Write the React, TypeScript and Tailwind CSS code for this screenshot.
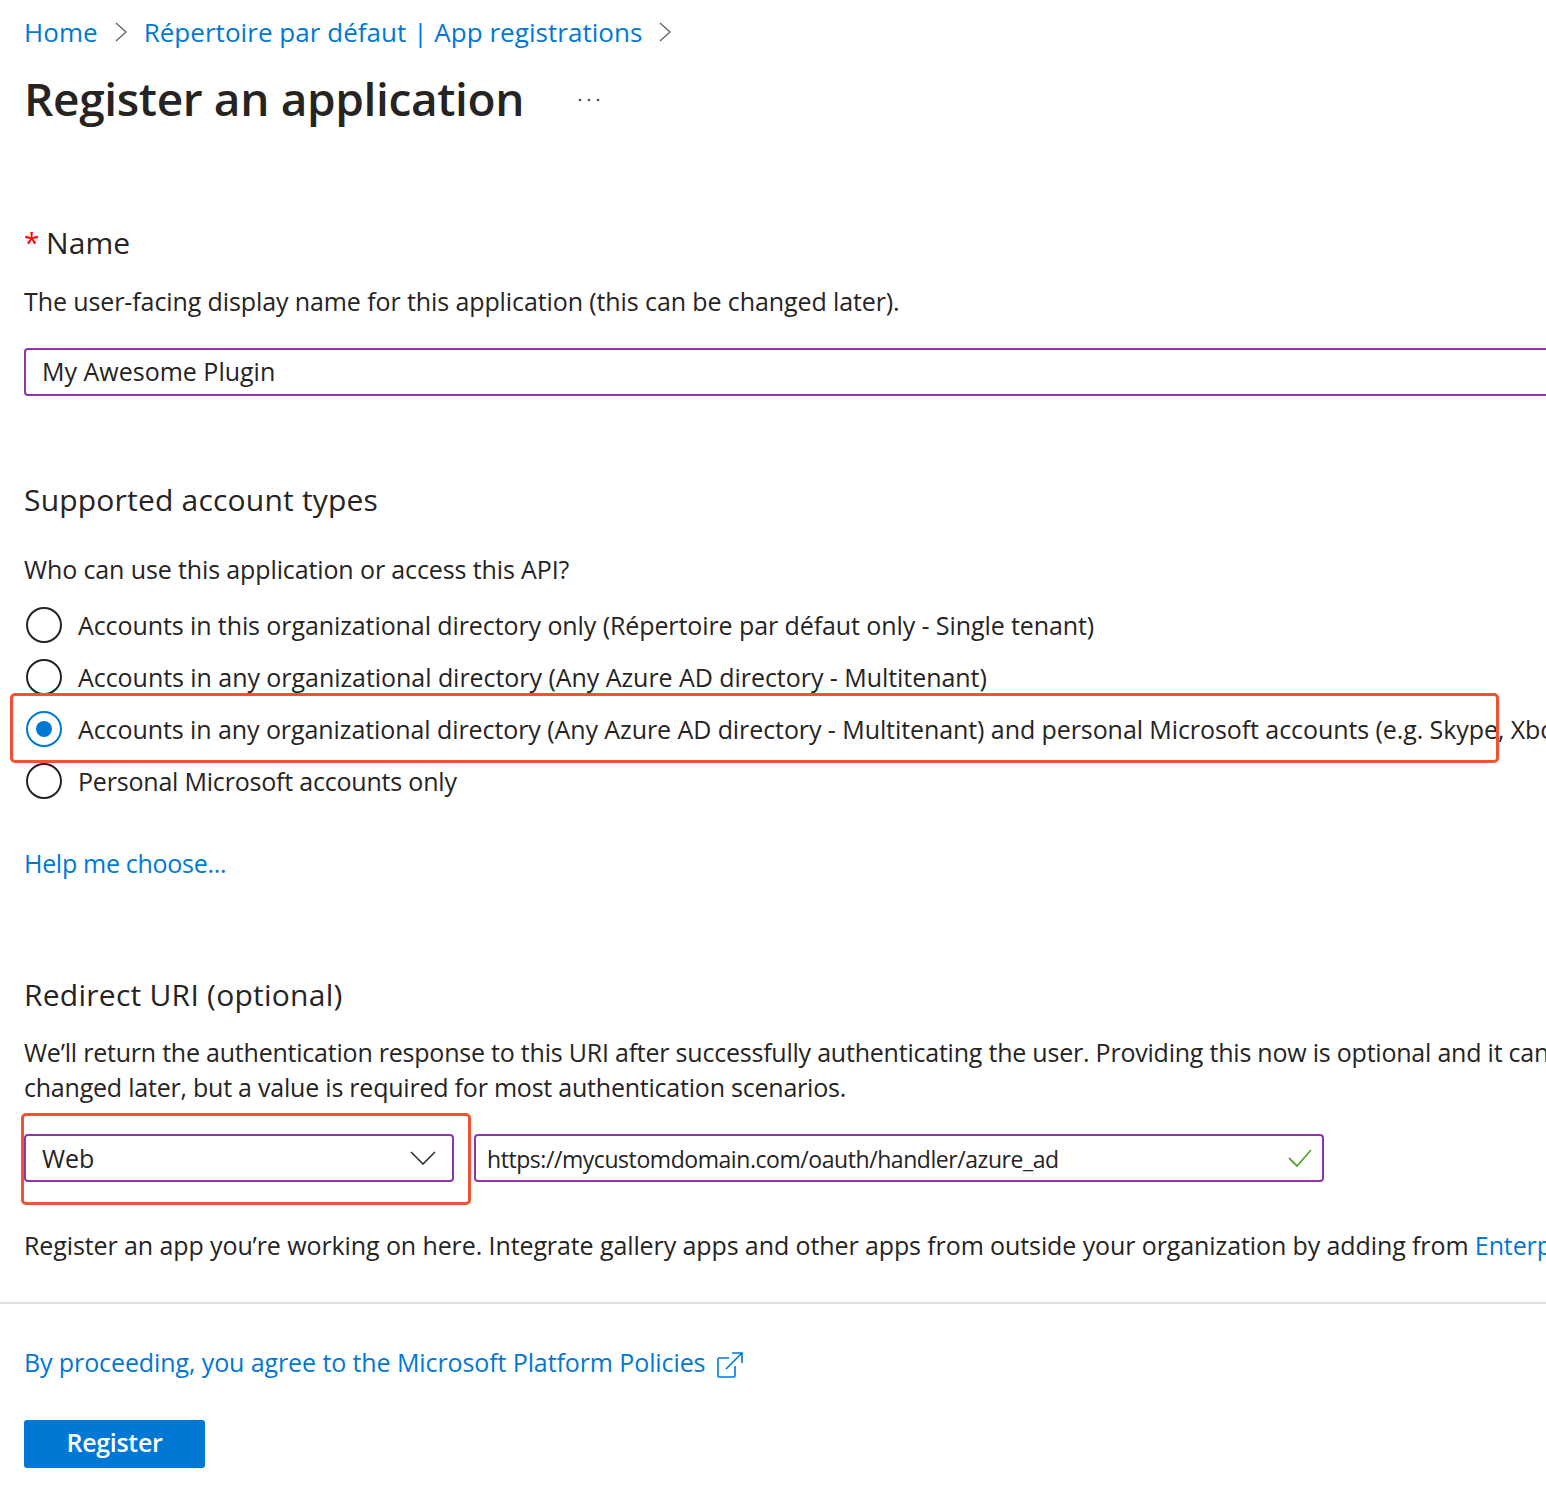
import React from "react";

const FONT = "font-['Open_Sans','Noto_Sans',sans-serif]";
const BODY = "text-[25px] tracking-[-0.1px] whitespace-nowrap";
const INK = "text-[#252423]";
const LINK = "text-[#0078d4]";

function Radio({ checked, label, spacing }: { checked?: boolean; label: string; spacing: string }) {
  return (
    <div className="flex h-[52px] items-center gap-[16px]">
      <span className={`flex h-[36px] w-[36px] shrink-0 items-center justify-center rounded-full border-2 ${checked ? "border-[#0078d4]" : "border-[#252423]"}`}>
        {checked && <span className="h-[16px] w-[16px] rounded-full bg-[#0078d4]" />}
      </span>
      <span className={`mt-[2px] whitespace-nowrap text-[25px] ${spacing} ${INK}`}>{label}</span>
    </div>
  );
}

function Chevron() {
  return (
    <svg className="mx-[17px] h-[20px] w-[12px] shrink-0" viewBox="0 0 12 20" fill="none" stroke="#6b6a69" strokeWidth="1.5">
      <path d="M1 1l10 9-10 9" />
    </svg>
  );
}

export default function App() {
  return (
    <div className={`relative h-[1488px] w-[1546px] overflow-hidden bg-white ${FONT}`}>
      <div className="pl-[24px]">
        <nav className={`mt-[16px] flex h-[32px] items-center whitespace-nowrap text-[26px] tracking-[0.04px] ${LINK}`}>
          <span>Home</span>
          <Chevron />
          <span>Répertoire par défaut | App registrations</span>
          <Chevron />
        </nav>
        <div className="mt-[18px] flex h-[64px] items-center">
          <h1 className={`whitespace-nowrap text-[46px] font-semibold tracking-[-0.36px] ${INK}`}>Register an application</h1>
          <svg className="ml-[54px] mt-[4px] h-[4px] w-[22px]" viewBox="0 0 22 4" fill="#55514e"><circle cx="2" cy="2" r="1.3" /><circle cx="11" cy="2" r="1.3" /><circle cx="20" cy="2" r="1.3" /></svg>
        </div>

        <div className={`mt-[92px] flex h-[40px] items-center ${INK}`}>
          <span className="w-[22px] text-[28px] leading-none text-[#ff0000]">*</span>
          <span className="whitespace-nowrap text-[30px] tracking-[0.1px]">Name</span>
        </div>
        <p className={`mt-[21px] h-[36px] leading-[36px] ${BODY} ${INK}`}>The user-facing display name for this application (this can be changed later).</p>
        <div className="mt-[29px] flex h-[48px] w-[1600px] items-center rounded-[4px] border-2 border-[#9132ad] pl-[16px]">
          <span className={`whitespace-nowrap text-[25px] ${INK}`}>My Awesome Plugin</span>
        </div>

        <h2 className={`mt-[84px] h-[40px] whitespace-nowrap text-[30px] font-normal leading-[40px] tracking-[0.2px] ${INK}`}>Supported account types</h2>
        <p className={`mt-[31px] h-[36px] leading-[36px] tracking-[-0.12px] whitespace-nowrap text-[25px] ${INK}`}>Who can use this application or access this API?</p>
        <div className="mt-[12px] flex flex-col pl-[2px]">
          <Radio spacing="tracking-[-0.09px]" label="Accounts in this organizational directory only (Répertoire par défaut only - Single tenant)" />
          <Radio spacing="tracking-[-0.05px]" label="Accounts in any organizational directory (Any Azure AD directory - Multitenant)" />
          <Radio checked spacing="tracking-[-0.08px]" label="Accounts in any organizational directory (Any Azure AD directory - Multitenant) and personal Microsoft accounts (e.g. Skype, Xbox)" />
          <Radio spacing="tracking-[-0.2px]" label="Personal Microsoft accounts only" />
        </div>
        <p className={`mt-[38px] h-[36px] whitespace-nowrap text-[25px] leading-[36px] tracking-[-0.3px] ${LINK}`}>Help me choose...</p>

        <h2 className={`mt-[94px] h-[40px] whitespace-nowrap text-[30px] font-normal leading-[40px] tracking-[0.25px] ${INK}`}>Redirect URI (optional)</h2>
        <p className={`mt-[20px] whitespace-nowrap text-[25px] leading-[35px] tracking-[-0.22px] ${INK}`}>
          We’ll return the authentication response to this URI after successfully authenticating the user. Providing this now is optional and it can be
          <br />
          changed later, but a value is required for most authentication scenarios.
        </p>
        <div className="mt-[29px] flex gap-[20px]">
          <div className="flex h-[48px] w-[430px] items-center justify-between rounded-[4px] border-2 border-[#9132ad] px-[16px]">
            <span className={`mt-[2px] whitespace-nowrap text-[25px] ${INK}`}>Web</span>
            <svg className="h-[14px] w-[26px]" viewBox="0 0 26 14" fill="none" stroke="#323130" strokeWidth="1.6"><path d="M1 1l12 12L25 1" /></svg>
          </div>
          <div className="flex h-[48px] w-[850px] items-center justify-between rounded-[4px] border-2 border-[#9132ad] pl-[11px] pr-[10px]">
            <span className={`mt-[2px] whitespace-nowrap text-[23px] tracking-[-0.44px] ${INK}`}>https://mycustomdomain.com/oauth/handler/azure_ad</span>
            <svg className="h-[18px] w-[24px]" viewBox="0 0 24 18" fill="none" stroke="#5aa233" strokeWidth="1.8"><path d="M1 9l8 8L23 1" /></svg>
          </div>
        </div>
        <p className={`mt-[45px] h-[36px] leading-[36px] ${BODY} ${INK}`}>
          Register an app you’re working on here. Integrate gallery apps and other apps from outside your organization by adding from <span className={LINK}>Enterprise applications</span>.
        </p>
      </div>

      <div className="mt-[39px] h-[2px] w-full bg-[#e1dfdd]" />

      <div className="pl-[24px]">
        <div className={`mt-[41px] flex h-[36px] items-center ${BODY} ${LINK}`}>
          <span>By proceeding, you agree to the Microsoft Platform Policies</span>
          <svg className="ml-[12px] mt-[4px] h-[26px] w-[26px]" viewBox="0 0 26 26" fill="none" stroke="#0078d4" strokeWidth="1.6"><path d="M12 6H2a1 1 0 0 0-1 1v17a1 1 0 0 0 1 1h15a1 1 0 0 0 1-1V14" /><path d="M9 17L25 1M15 1h10v10" /></svg>
        </div>
        <button className="mt-[39px] flex h-[48px] w-[181px] items-center justify-center rounded-[3px] bg-[#0078d4] pb-[2px] text-[25px] font-semibold tracking-[-0.3px] text-white">Register</button>
      </div>

      <div className="pointer-events-none absolute left-[10px] top-[693px] h-[70px] w-[1489px] rounded-[5px] border-[3px] border-[#f25232]" />
      <div className="pointer-events-none absolute left-[21px] top-[1113px] h-[92px] w-[450px] rounded-[5px] border-[3px] border-[#f25232]" />
    </div>
  );
}
